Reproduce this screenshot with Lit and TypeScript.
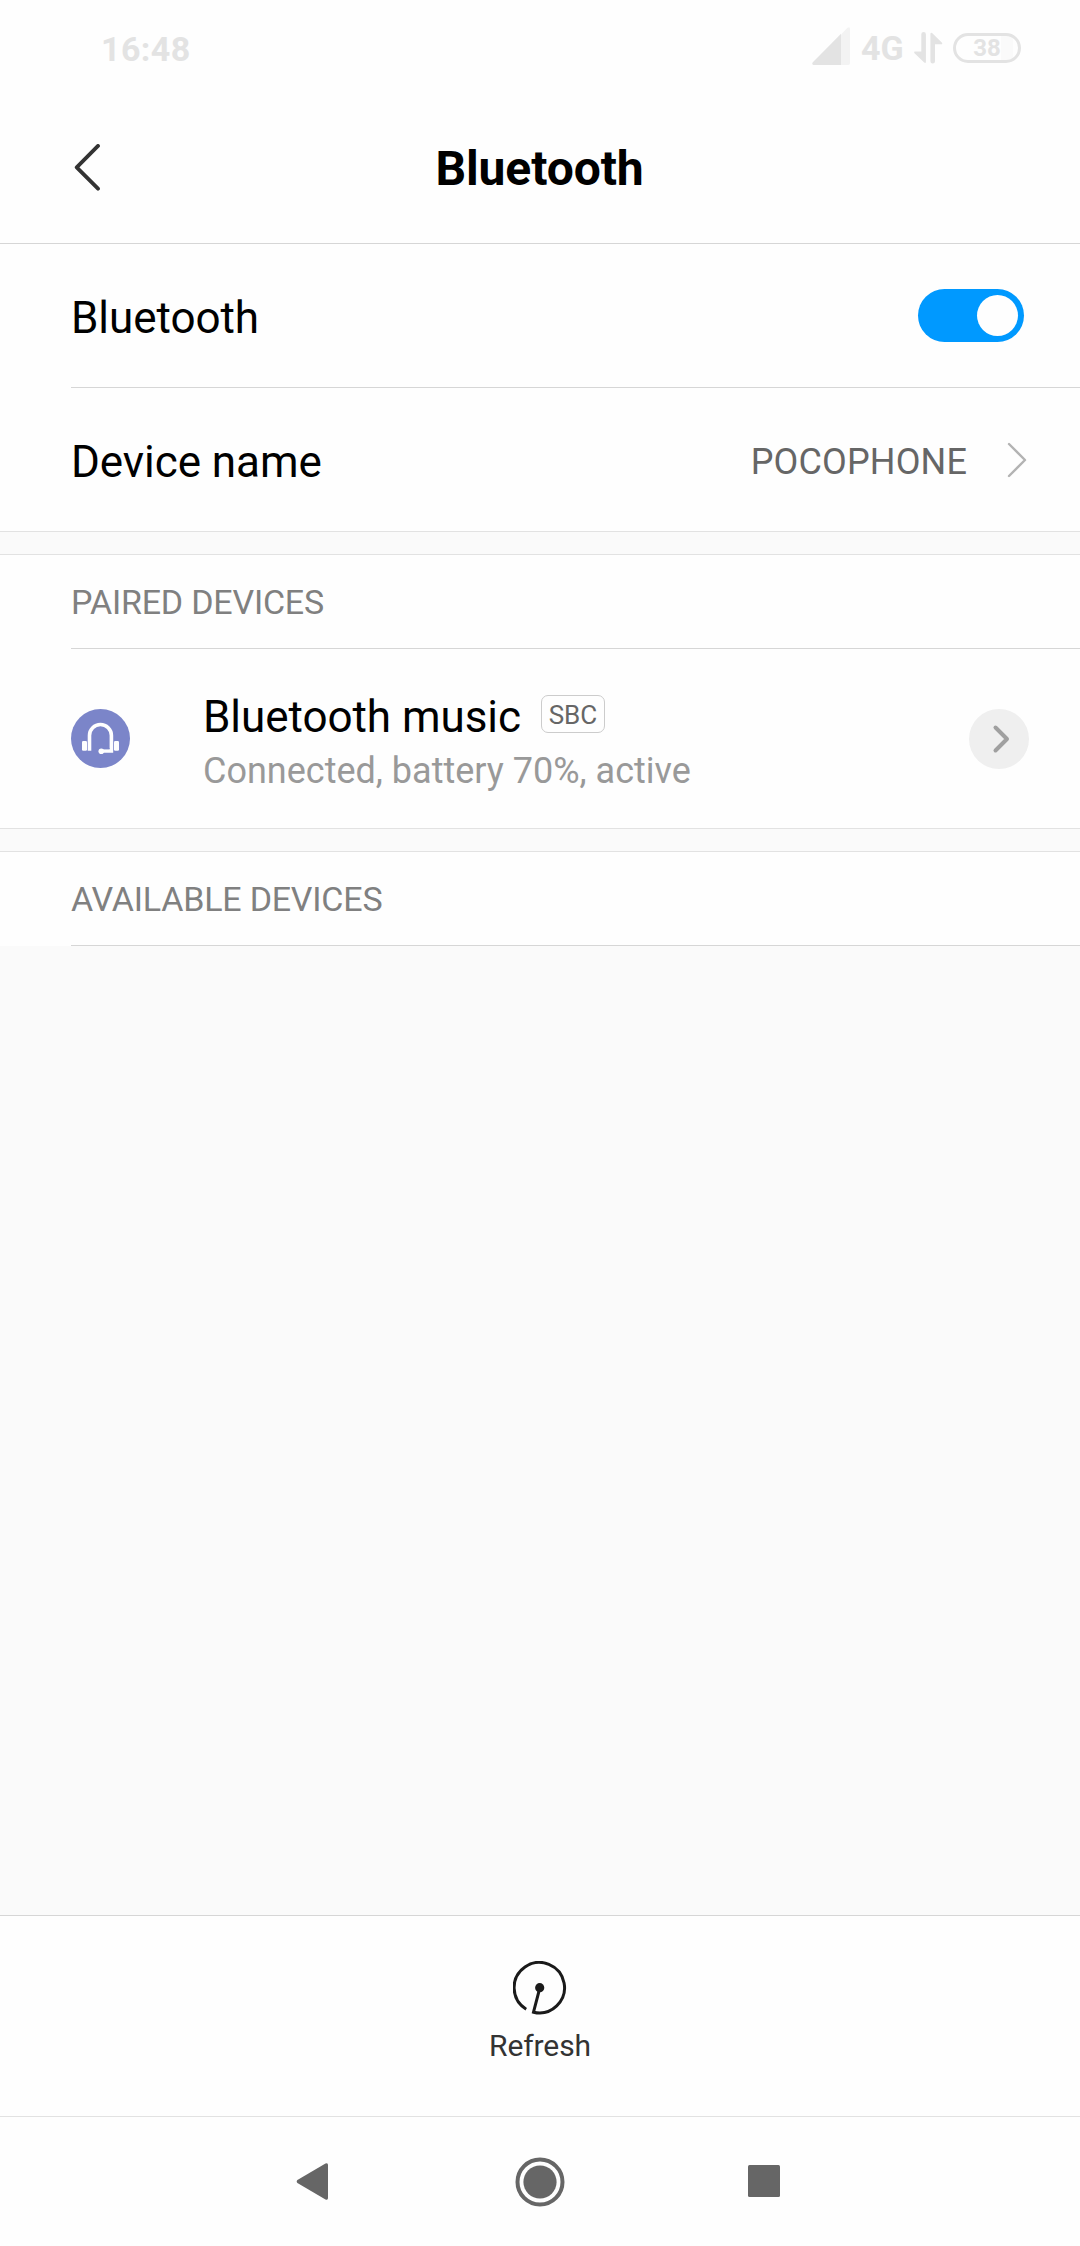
import { LitElement, html, css, svg } from "lit";
import { customElement, property, state } from "lit/decorators.js";

@customElement("status-bar")
class StatusBar extends LitElement {
  static styles = css`
    :host { display: flex; justify-content: space-between; height: 90px; box-sizing: border-box; color: #e3e3e3; font-weight: 700; }
    .time { padding: 29px 0 0 101px; font-size: 34px; line-height: 40px; letter-spacing: 0.4px; }
    .right { display: flex; padding: 27px 59px 0 0; }
    .net { padding: 1px 0 0 11px; width: 61px; box-sizing: border-box; font-size: 34px; line-height: 40px; }
    .data { margin: 5px 0 0 3px; }
    .battery { display: flex; justify-content: center; box-sizing: border-box; width: 68px; height: 30px; margin: 6px 0 0 10px; border: 3px solid #e3e3e3; border-radius: 15px; font-size: 24px; line-height: 25px; background: linear-gradient(90deg, transparent 73%, #fafafa 73%, #fafafa 92%, transparent 92%); }
    svg { display: block; flex: none; }
  `;
  render() {
    return html`
      <div class="time">16:48</div>
      <div class="right">
        <svg width="38" height="38" viewBox="0 0 38 38">
          <path d="M29 7.5 35.5 .8Q38 -.6 38 2V36q0 2-2 2H29Z" fill="#f3f3f3"/>
          <path d="M29 6.7V38H1.5Q-.6 37.5.8 35.3Z" fill="#e3e3e3"/>
        </svg>
        <div class="net">4G</div>
        <svg class="data" width="29" height="32" viewBox="0 0 29 32" fill="#e3e3e3">
          <path d="M7.3 2.3a2.3 2.3 0 0 1 4.6 0V29.5q0 2.4-1.7 1.1L.5 21.2Q-.5 19.4 1 19.4H7.3Z"/>
          <path d="M21 29.3a2.3 2.3 0 0 1-4.6 0V2.2q0-2.4 1.7-1.1L27.8 10.500q1.200 1.700-.5 1.800H21Z"/>
        </svg>
        <div class="battery">38</div>
      </div>
    `;
  }
}

@customElement("section-title")
class SectionTitle extends LitElement {
  @property() label = "";
  static styles = css`
    :host { display: block; height: 95px; box-sizing: border-box; border-top: 1px solid #e2e2e2; padding-left: 71px; background: #fefefe; }
    .line { height: 94px; box-sizing: border-box; border-bottom: 1px solid #d6d6d6; padding-top: 1px; font-size: 34px; line-height: 93px; letter-spacing: -0.2px; color: #808080; }
  `;
  render() {
    return html`<div class="line">${this.label}</div>`;
  }
}

@customElement("app-root")
class AppRoot extends LitElement {
  @state() private enabled = true;

  static styles = css`
    :host { display: flex; flex-direction: column; height: 2246px; background: #fafafa; font-family: Roboto, "Liberation Sans", sans-serif; color: #000; }
    svg { display: block; flex: none; }
    .top { height: 244px; box-sizing: border-box; border-bottom: 1px solid #d6d6d6; background: #fefefe; }
    .header { display: grid; grid-template-columns: 140px 1fr 140px; height: 153px; }
    .back { padding: 54px 0 0 73px; }
    .title { margin: 0; text-align: center; font-size: 48px; line-height: 56px; font-weight: 700; letter-spacing: -0.1px; padding: 51px 1px 0 0; }
    .group { background: #fefefe; border-bottom: 1px solid #e2e2e2; }
    .row { display: flex; align-items: center; justify-content: space-between; height: 143px; margin-left: 71px; }
    .row + .row { border-top: 1px solid #d6d6d6; }
    .label { font-size: 44px; line-height: 52px; padding-top: 5px; letter-spacing: -0.05px; }
    .toggle { width: 106px; height: 53px; box-sizing: border-box; border-radius: 27px; padding: 6px; margin-right: 56px; background: #ccc; display: flex; }
    .toggle.on { background: #09f; justify-content: flex-end; }
    .knob { width: 41px; height: 41px; border-radius: 50%; background: #fefefe; }
    .value { display: flex; align-items: center; padding-right: 53px; gap: 40px; }
    .name { font-size: 36px; line-height: 42px; padding-top: 5px; letter-spacing: 0.15px; color: #666; }
    .gap { height: 22px; }
    .device { display: flex; align-items: center; height: 179px; padding: 0 51px 0 71px; }
    .info { flex: 1; padding: 12px 0 0 73px; }
    .heading { display: flex; gap: 20px; height: 52px; }
    .heading .label { padding: 0; }
    .codec { box-sizing: border-box; width: 64px; height: 38px; margin-top: 4px; border: 1px solid #ccc; border-radius: 7px; font-size: 26px; line-height: 38px; text-align: center; color: #666; }
    .status { font-size: 36px; line-height: 56px; color: #999; }
    .more { width: 60px; height: 60px; border-radius: 50%; background: #efefef; margin-top: 1px; }
    .empty { flex: 1; }
    .footer { height: 201px; box-sizing: border-box; border-top: 1px solid #d6d6d6; background: #fefefe; display: flex; flex-direction: column; align-items: center; padding-top: 45px; }
    .refresh { font-size: 30px; line-height: 36px; padding-top: 13px; letter-spacing: -0.1px; color: #333; }
    .nav { height: 130px; box-sizing: border-box; border-top: 1px solid #e2e2e2; background: #fefefe; display: flex; align-items: center; justify-content: space-between; padding: 0 300px 0 296px; }
    .home { margin-left: 4px; }
    .recent { margin-bottom: 1px; }
  `;

  private headset() {
    return svg`
      <circle cx="29.5" cy="29.5" r="29.5" fill="#7b85c9"/>
      <path d="M18.500 41.700V26.500a10.800 10.800 0 0 1 21.900 0V42H31" fill="none" stroke="#fefefe" stroke-width="3.600"/>
      <path d="M31 39h7.500v1.200H31z" fill="#7b85c9"/>
      <rect x="11" y="32" width="5" height="9.700" rx="1.200" fill="#fefefe"/>
      <rect x="43" y="32" width="5" height="9.700" rx="1.200" fill="#fefefe"/>
      <circle cx="30.300" cy="42.300" r="2.800" fill="#fefefe"/>`;
  }

  render() {
    return html`
      <div class="top">
        <status-bar></status-bar>
        <header class="header">
          <div class="back">
            <svg width="28" height="48" viewBox="0 0 28 48"><path d="M25 1.900 3.700 23.300 25 44.700" fill="none" stroke="#333" stroke-width="3.800" stroke-linecap="round" stroke-linejoin="round"/></svg>
          </div>
          <h1 class="title">Bluetooth</h1>
        </header>
      </div>
      <div class="group">
        <div class="row">
          <div class="label">Bluetooth</div>
          <div class="toggle ${this.enabled ? "on" : ""}" @click=${() => (this.enabled = !this.enabled)}><div class="knob"></div></div>
        </div>
        <div class="row">
          <div class="label">Device name</div>
          <div class="value">
            <div class="name">POCOPHONE</div>
            <svg width="20" height="36" viewBox="0 0 20 36"><path d="M2 2 18 18 2 34" fill="none" stroke="#b3b3b3" stroke-width="2.400" stroke-linecap="round" stroke-linejoin="round"/></svg>
          </div>
        </div>
      </div>
      <div class="gap"></div>
      <section-title label="PAIRED DEVICES"></section-title>
      <div class="group">
        <div class="device">
          <svg width="59" height="59" viewBox="0 0 59 59">${this.headset()}</svg>
          <div class="info">
            <div class="heading"><div class="label">Bluetooth music</div><div class="codec">SBC</div></div>
            <div class="status">Connected, battery 70%, active</div>
          </div>
          <svg class="more" viewBox="0 0 60 60"><path d="M26.500 18.500 38 30 26.500 41.500" fill="none" stroke="#a0a0a0" stroke-width="4" stroke-linecap="round" stroke-linejoin="round"/></svg>
        </div>
      </div>
      <div class="gap"></div>
      <section-title label="AVAILABLE DEVICES"></section-title>
      <div class="empty"></div>
      <footer class="footer">
        <svg width="54" height="54" viewBox="0 0 54 54">
          <path d="M13.200 48.200A25.200 25.200 0 1 1 20.500 51.200L26.800 27" fill="none" stroke="#1a1a1a" stroke-width="3"/>
          <circle cx="26.700" cy="26.700" r="4.600" fill="#1a1a1a"/>
        </svg>
        <div class="refresh">Refresh</div>
      </footer>
      <nav class="nav">
        <svg width="32" height="37" viewBox="0 0 32 37"><path d="M1.400 17 29.500.5Q32-.4 32 2V35q0 2.400-2.500 1.500L1.400 20Q0 18.500 1.400 17Z" fill="#666"/></svg>
        <svg class="home" width="50" height="50" viewBox="0 0 50 50"><circle cx="25" cy="25" r="22.500" fill="none" stroke="#666" stroke-width="4"/><circle cx="25" cy="25" r="16.600" fill="#666"/></svg>
        <svg class="recent" width="32" height="32" viewBox="0 0 32 32"><rect width="32" height="32" rx="1.500" fill="#666"/></svg>
      </nav>
    `;
  }
}
